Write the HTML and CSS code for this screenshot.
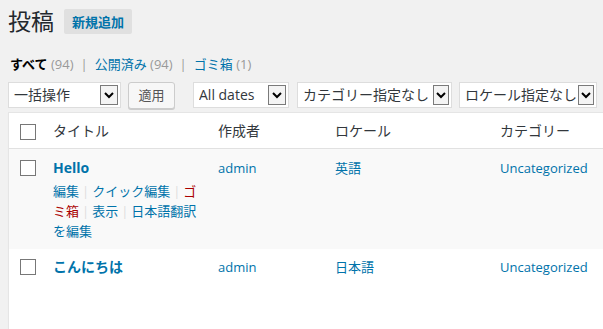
FILE: index.html
```html
<!DOCTYPE html>
<html lang="ja">
<head>
<meta charset="utf-8">
<title>投稿</title>
<link rel="stylesheet" href="styles.css">
</head>
<body>
<div class="wrap">
  <div class="head">
    <h1>投稿</h1>
    <a href="javascript:;" class="add-new">新規追加</a>
  </div>

  <ul class="subsub">
    <li class="current">すべて <span class="count">(94)</span></li>
    <li class="sep">|</li>
    <li><a href="javascript:;">公開済み</a> <span class="count">(94)</span></li>
    <li class="sep">|</li>
    <li><a href="javascript:;">ゴミ箱</a> <span class="count">(1)</span></li>
  </ul>

  <div class="tablenav">
    <div class="select s-bulk"><span class="label">一括操作</span><span class="arrow"><svg width="10" height="7" viewBox="0 0 10 7"><polyline points="1,1 5,5 9,1" fill="none" stroke="#000" stroke-width="2"/></svg></span></div>
    <button class="btn-apply">適用</button>
    <div class="select s-date"><span class="label">All dates</span><span class="arrow"><svg width="10" height="7" viewBox="0 0 10 7"><polyline points="1,1 5,5 9,1" fill="none" stroke="#000" stroke-width="2"/></svg></span></div>
    <div class="select s-cat"><span class="label">カテゴリー指定なし</span><span class="arrow"><svg width="10" height="7" viewBox="0 0 10 7"><polyline points="1,1 5,5 9,1" fill="none" stroke="#000" stroke-width="2"/></svg></span></div>
    <div class="select s-locale"><span class="label">ロケール指定なし</span><span class="arrow"><svg width="10" height="7" viewBox="0 0 10 7"><polyline points="1,1 5,5 9,1" fill="none" stroke="#000" stroke-width="2"/></svg></span></div>
  </div>

  <table class="posts">
    <colgroup>
      <col class="c-cb">
      <col class="c-title">
      <col class="c-author">
      <col class="c-locale">
      <col class="c-cat">
    </colgroup>
    <thead>
      <tr>
        <th class="cb"><input type="checkbox"></th>
        <th>タイトル</th>
        <th>作成者</th>
        <th>ロケール</th>
        <th>カテゴリー</th>
      </tr>
    </thead>
    <tbody>
      <tr class="alt">
        <td class="cb"><input type="checkbox"></td>
        <td>
          <a href="javascript:;" class="row-title">Hello</a>
          <div class="row-actions"><a href="javascript:;">編集</a><span class="sep">|</span><a href="javascript:;">クイック編集</a><span class="sep">|</span><a href="javascript:;" class="trash">ゴミ箱</a><span class="sep">|</span><a href="javascript:;">表示</a><span class="sep">|</span><a href="javascript:;">日本語翻訳を編集</a></div>
        </td>
        <td><a href="javascript:;">admin</a></td>
        <td><a href="javascript:;">英語</a></td>
        <td><a href="javascript:;">Uncategorized</a></td>
      </tr>
      <tr class="short">
        <td class="cb"><input type="checkbox"></td>
        <td><a href="javascript:;" class="row-title">こんにちは</a></td>
        <td><a href="javascript:;">admin</a></td>
        <td><a href="javascript:;">日本語</a></td>
        <td><a href="javascript:;">Uncategorized</a></td>
      </tr>
    </tbody>
  </table>
</div>
</body>
</html>
```

FILE: styles.css
```css
html,body{margin:0;padding:0;}
body{background:#f1f1f1;color:#444;font:13px/20px "Open Sans","Noto Sans CJK JP",sans-serif;overflow:hidden;}
a{color:#0073aa;text-decoration:none;}
ul{list-style:none;margin:0;padding:0;}

.wrap{padding:7px 0 0 8px;}

.head{display:flex;align-items:center;height:29px;}
.head h1{margin:0 10px 0 0;font-size:23px;line-height:29px;font-weight:400;color:#23282d;}
.add-new{display:inline-flex;align-items:center;height:25px;padding:0 8px;background:#e0e0e0;border-radius:2px;font-weight:700;font-size:13px;}

.subsub{display:flex;margin:18px 0 0 2px;height:20px;}
.subsub li{white-space:nowrap;}
.subsub .current{color:#000;font-weight:700;}
.subsub .count{color:#999;font-weight:400;}
.subsub .sep{color:#999;margin:0 7px;}

.tablenav{display:flex;align-items:center;margin-top:8px;height:26px;}
.select{display:flex;align-items:center;height:26px;box-sizing:border-box;border:1px solid #ddd;background:#fff;padding-left:5px;font-size:14px;color:#32373c;overflow:hidden;}
.select .label{flex:1;white-space:nowrap;overflow:hidden;}
.select .arrow{flex:none;display:flex;align-items:center;justify-content:center;width:18px;height:20px;box-sizing:border-box;border:1px solid #7a7a7a;background:#f4f4f4;margin:0 2px 0 0;}
.s-bulk{width:113px;margin-right:7px;}
.s-date{width:96px;margin-right:8px;}
.s-cat{width:155px;margin-right:7px;}
.s-locale{width:138px;}
.s-cat .arrow,.s-locale .arrow{width:16px;}
.btn-apply{width:47px;height:27px;margin-right:18px;padding:0;background:#f7f7f7;border:1px solid #ccc;border-radius:3px;box-shadow:0 1px 0 #ccc;font:13px/20px "Open Sans","Noto Sans CJK JP",sans-serif;color:#555;}

.posts{margin-top:4px;width:640px;table-layout:fixed;border-collapse:separate;border-spacing:0;border:1px solid #e5e5e5;background:#fff;box-shadow:0 1px 1px rgba(0,0,0,.04);}
.c-cb{width:34px;}
.c-title{width:165px;}
.c-author{width:117px;}
.c-locale{width:165px;}
.posts th{text-align:left;font-weight:400;font-size:14px;line-height:20px;color:#32373c;padding:8px 10px 7px;border-bottom:1px solid #e1e1e1;}
.posts td{vertical-align:top;padding:9px 10px 8px;font-size:13px;line-height:20px;}
.posts td:nth-child(2){padding-right:5px;}
.posts th.cb,.posts td.cb{padding-left:11px;padding-right:0;}
.posts th.cb{padding-top:9px;}
.posts td.cb{padding-top:11px;}
.posts tr.alt td{background:#f9f9f9;}
.posts tr.short td{padding-top:8px;height:62px;}
.posts tr.short td.cb{padding-top:10px;}

input[type=checkbox]{appearance:none;-webkit-appearance:none;display:block;margin:0;width:16px;height:16px;box-sizing:border-box;border:1px solid #777;background:#fff;border-radius:0;}

.row-title{font-size:14px;font-weight:700;}
.row-actions{padding-top:3px;}
.row-actions .sep{color:#ddd;margin:0 3px;}
.row-actions .trash{color:#a00;}
```
